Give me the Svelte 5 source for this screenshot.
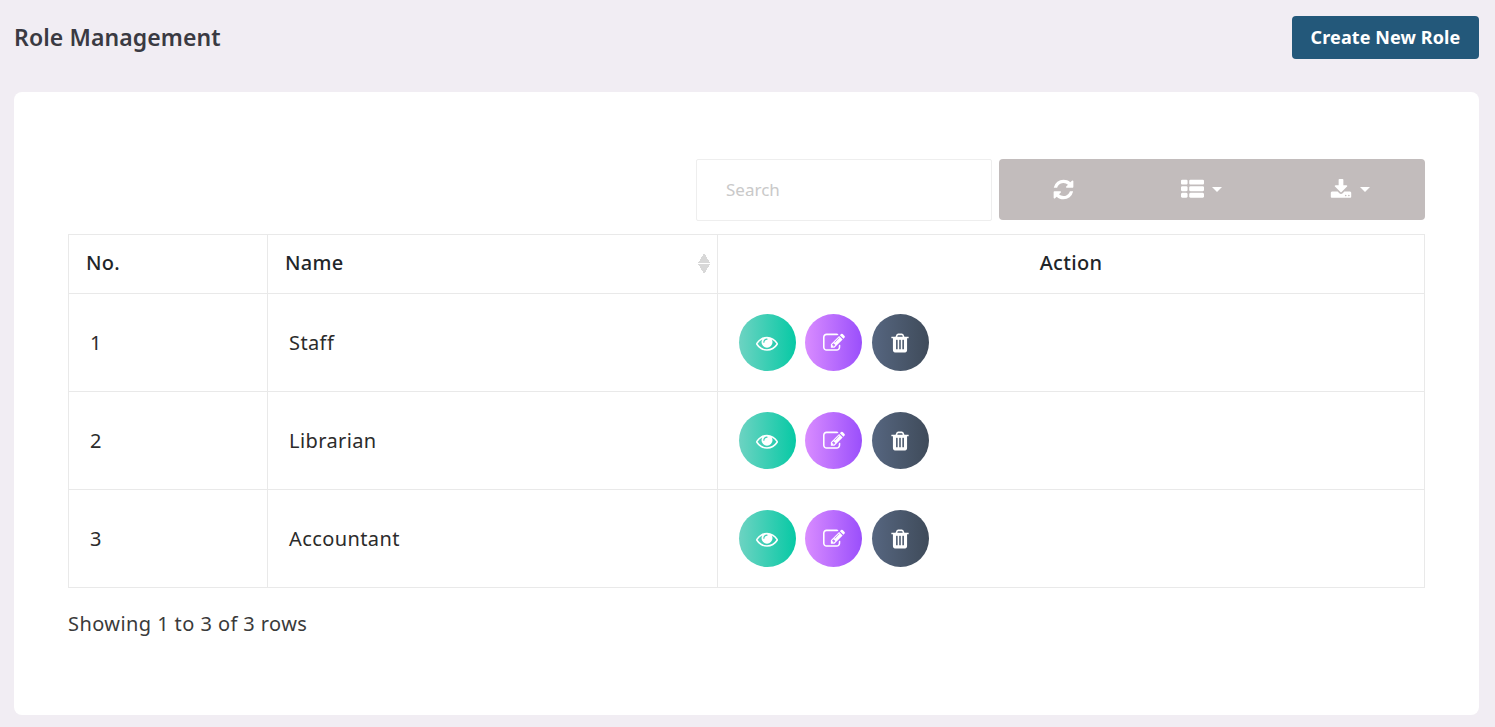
<script>
  const roles = ['Staff', 'Librarian', 'Accountant'];

  const icons = {
    refresh:
      'M1639 1056q0 5-1 7-64 268-268 434.5t-478 166.5q-146 0-282.5-55t-243.5-157l-129 129q-19 19-45 19t-45-19-19-45v-448q0-26 19-45t45-19h448q26 0 45 19t19 45-19 45l-137 137q71 66 161 102t187 36q134 0 250-65t186-179q11-17 53-117 8-23 30-23h192q13 0 22.5 9.5t9.5 22.5zm25-800v448q0 26-19 45t-45 19h-448q-26 0-45-19t-19-45 19-45l138-138q-148-137-349-137-134 0-250 65t-186 179q-11 17-53 117-8 23-30 23h-199q-13 0-22.5-9.5t-9.5-22.5v-7q65-268 270-434.5t480-166.5q146 0 284 55.5t245 156.5l130-129q19-19 45-19t45 19 19 45z',
    list:
      'M512 1248v192q0 40-28 68t-68 28h-320q-40 0-68-28t-28-68v-192q0-40 28-68t68-28h320q40 0 68 28t28 68zm0-512v192q0 40-28 68t-68 28h-320q-40 0-68-28t-28-68v-192q0-40 28-68t68-28h320q40 0 68 28t28 68zm1280 512v192q0 40-28 68t-68 28h-960q-40 0-68-28t-28-68v-192q0-40 28-68t68-28h960q40 0 68 28t28 68zm-1280-1024v192q0 40-28 68t-68 28h-320q-40 0-68-28t-28-68v-192q0-40 28-68t68-28h320q40 0 68 28t28 68zm1280 512v192q0 40-28 68t-68 28h-960q-40 0-68-28t-28-68v-192q0-40 28-68t68-28h960q40 0 68 28t28 68zm0-512v192q0 40-28 68t-68 28h-960q-40 0-68-28t-28-68v-192q0-40 28-68t68-28h960q40 0 68 28t28 68z',
    download:
      'M1344 1344q0-26-19-45t-45-19-45 19-19 45 19 45 45 19 45-19 19-45zm256 0q0-26-19-45t-45-19-45 19-19 45 19 45 45 19 45-19 19-45zm128-224v320q0 40-28 68t-68 28h-1472q-40 0-68-28t-28-68v-320q0-40 28-68t68-28h465l135 136q58 56 136 56t136-56l136-136h464q40 0 68 28t28 68zm-325-569q17 41-14 70l-448 448q-18 19-45 19t-45-19l-448-448q-31-29-14-70 17-39 59-39h256v-448q0-26 19-45t45-19h256q26 0 45 19t19 45v448h256q42 0 59 39z',
    eye:
      'M1664 960q-152-236-381-353 61 104 61 225 0 185-131.5 316.5t-316.5 131.5-316.5-131.5-131.5-316.5q0-121 61-225-229 117-381 353 133 205 333.5 326.5t434.5 121.5 434.5-121.5 333.5-326.5zm-720-384q0-20-14-34t-34-14q-125 0-214.5 89.5t-89.5 214.5q0 20 14 34t34 14 34-14 14-34q0-86 61-147t147-61q20 0 34-14t14-34zm848 384q0 34-20 69-140 230-376.5 368.5t-499.5 138.5-499.5-139-376.5-368q-20-35-20-69t20-69q140-229 376.5-368t499.5-139 499.5 139 376.5 368q20 35 20 69z',
    edit:
      'M888 1184l116-116-152-152-116 116v56h96v96h56zm440-720q-16-16-33 1l-350 350q-17 17-1 33t33-1l350-350q17-17 1-33zm80 594v190q0 119-84.5 203.5t-203.5 84.5h-832q-119 0-203.5-84.5t-84.5-203.5v-832q0-119 84.5-203.5t203.5-84.5h832q63 0 117 25 15 7 18 23 3 17-9 29l-49 49q-14 14-32 8-23-6-45-6h-832q-66 0-113 47t-47 113v832q0 66 47 113t113 47h832q66 0 113-47t47-113v-126q0-13 9-22l64-64q15-15 35-7t20 29zm-96-738l288 288-672 672h-288v-288zm444 132l-92 92-288-288 92-92q28-28 68-28t68 28l152 152q28 28 28 68t-28 68z',
    trash:
      'M704 1376v-704q0-14-9-23t-23-9h-64q-14 0-23 9t-9 23v704q0 14 9 23t23 9h64q14 0 23-9t9-23zm256 0v-704q0-14-9-23t-23-9h-64q-14 0-23 9t-9 23v704q0 14 9 23t23 9h64q14 0 23-9t9-23zm256 0v-704q0-14-9-23t-23-9h-64q-14 0-23 9t-9 23v704q0 14 9 23t23 9h64q14 0 23-9t9-23zm-544-992h448l-48-117q-7-9-17-11h-317q-10 2-17 11zm928 32v64q0 14-9 23t-23 9h-96v948q0 83-47 143.5t-113 60.5h-832q-66 0-113-58.5t-47-141.5v-952h-96q-14 0-23-9t-9-23v-64q0-14 9-23t23-9h309l70-167q15-37 54-63t79-26h320q40 0 79 26t54 63l70 167h309q14 0 23 9t9 23z'
  };
</script>

{#snippet icon(d, size)}
  <svg viewBox="0 0 1792 1792" width={size} height={size} fill="currentColor" aria-hidden="true"><path {d} /></svg>
{/snippet}

<div class="page">
  <header class="top">
    <h1>Role Management</h1>
    <button type="button" class="create">Create New Role</button>
  </header>

  <section class="card">
    <div class="toolbar">
      <input class="search" type="text" placeholder="Search" />
      <div class="tools">
        <button type="button">{@render icon(icons.refresh, 23)}</button>
        <button type="button">{@render icon(icons.list, 23)}<span class="caret"></span></button>
        <button type="button">{@render icon(icons.download, 22)}<span class="caret"></span></button>
      </div>
    </div>

    <table>
      <colgroup>
        <col class="col-no" />
        <col class="col-name" />
        <col />
      </colgroup>
      <thead>
        <tr>
          <th>No.</th>
          <th class="sortable">Name<span class="sort"></span></th>
          <th class="center">Action</th>
        </tr>
      </thead>
      <tbody>
        {#each roles as role, i}
          <tr>
            <td>{i + 1}</td>
            <td>{role}</td>
            <td class="action-cell">
              <div class="actions">
                <button type="button" class="round view">{@render icon(icons.eye, 22)}</button>
                <button type="button" class="round edit">{@render icon(icons.edit, 22)}</button>
                <button type="button" class="round del">{@render icon(icons.trash, 22)}</button>
              </div>
            </td>
          </tr>
        {/each}
      </tbody>
    </table>

    <p class="summary">Showing 1 to 3 of 3 rows</p>
  </section>
</div>

<style>
  :global(body) {
    background: #f1edf3;
  }

  .page {
    font-family: 'Noto Sans', 'Open Sans', sans-serif;
    padding: 16px 16px 12px 14px;
    color: #212529;
  }

  .top {
    display: flex;
    justify-content: space-between;
    align-items: center;
    margin-bottom: 33px;
  }

  h1 {
    margin: 0 0 1px;
    font-size: 23px;
    font-weight: 600;
    color: #3a3a42;
    letter-spacing: 0.1px;
  }

  .create {
    width: 187px;
    height: 43px;
    padding: 0 0 2px;
    border: 0;
    border-radius: 4px;
    background: #23587a;
    color: #fff;
    font: 700 18px 'Noto Sans', sans-serif;
    letter-spacing: 0.1px;
  }

  .card {
    height: 623px;
    box-sizing: border-box;
    padding: 67px 54px 0;
    background: #fff;
    border-radius: 8px;
  }

  .toolbar {
    display: flex;
    justify-content: flex-end;
    gap: 7px;
    margin-bottom: 13px;
  }

  .search {
    width: 296px;
    height: 62px;
    box-sizing: border-box;
    padding: 0 29px 2px;
    border: 1px solid #eeeeee;
    border-radius: 2px;
    outline: 0;
    font: 400 17px 'Noto Sans', sans-serif;
  }

  .search::placeholder {
    color: #c9c9c9;
  }

  .tools {
    display: grid;
    grid-template-columns: 128px 148px 150px;
    height: 61px;
    border-radius: 4px;
    background: #c2bcbc;
  }

  .tools button {
    display: flex;
    align-items: center;
    justify-content: center;
    gap: 8px;
    border: 0;
    background: none;
    color: #fff;
    padding: 0;
  }

  .caret {
    border-top: 5px solid #fff;
    border-left: 5px solid transparent;
    border-right: 5px solid transparent;
  }

  table {
    width: 100%;
    table-layout: fixed;
    border-collapse: collapse;
    font-size: 20px;
  }

  .col-no {
    width: 199px;
  }

  .col-name {
    width: 450px;
  }

  th,
  td {
    border: 1px solid #e9e9e9;
    text-align: left;
    padding: 0 21px;
  }

  th {
    height: 55px;
    padding: 0 17px 3px;
    font-weight: 500;
    letter-spacing: 0.3px;
    color: #212529;
  }

  td {
    height: 97px;
    letter-spacing: 0.4px;
    color: #2b2b2b;
  }

  td.action-cell {
    padding-left: 20.6px;
  }

  th.center {
    text-align: center;
  }

  .sortable {
    position: relative;
  }

  .sort {
    position: absolute;
    right: 7px;
    top: 18px;
    width: 12px;
    height: 21px;
    background:
      linear-gradient(to bottom right, transparent 50%, #d8d8d8 50%) 0 0 / 6px 10px no-repeat,
      linear-gradient(to bottom left, transparent 50%, #d8d8d8 50%) 6px 0 / 6px 10px no-repeat,
      linear-gradient(to top right, transparent 50%, #d8d8d8 50%) 0 11px / 6px 10px no-repeat,
      linear-gradient(to top left, transparent 50%, #d8d8d8 50%) 6px 11px / 6px 10px no-repeat;
  }

  .actions {
    display: flex;
    gap: 9.5px;
  }

  .round {
    width: 57px;
    height: 57px;
    padding: 0;
    display: flex;
    align-items: center;
    justify-content: center;
    border: 0;
    border-radius: 50%;
    color: #fff;
  }

  .view {
    background: linear-gradient(to right, #6dd3c2, #07c9a5);
  }

  .edit {
    background: linear-gradient(to right, #d98cff, #9a4ffb);
  }

  .del {
    background: linear-gradient(to right, #566680, #3f4b5a);
  }

  .summary {
    margin: 22px 0 0;
    font-size: 20px;
    letter-spacing: 0.42px;
    color: #3a3a3a;
  }
</style>
